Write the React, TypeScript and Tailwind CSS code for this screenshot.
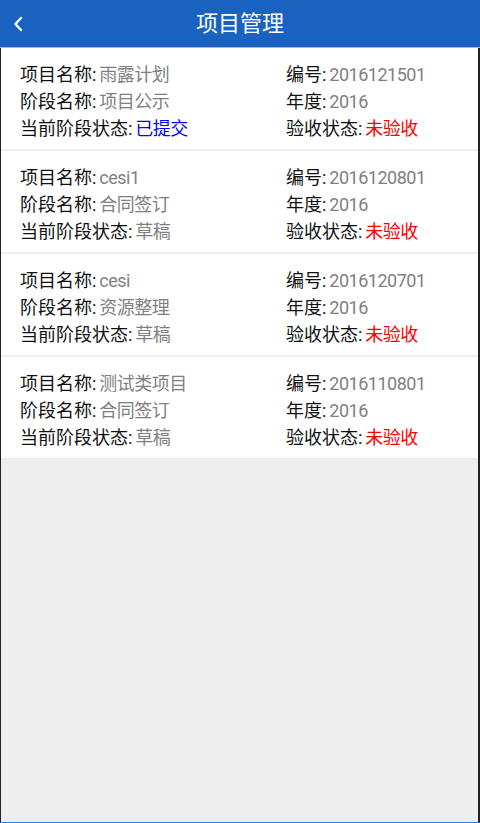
const font = '[font-family:"Roboto","Noto_Sans_CJK_SC",sans-serif]';

type Project = {
  name: string;
  code: string;
  stage: string;
  year: string;
  status: string;
  submitted: boolean;
  check: string;
};

const projects: Project[] = [
  { name: '雨露计划', code: '2016121501', stage: '项目公示', year: '2016', status: '已提交', submitted: true, check: '未验收' },
  { name: 'cesi1', code: '2016120801', stage: '合同签订', year: '2016', status: '草稿', submitted: false, check: '未验收' },
  { name: 'cesi', code: '2016120701', stage: '资源整理', year: '2016', status: '草稿', submitted: false, check: '未验收' },
  { name: '测试类项目', code: '2016110801', stage: '合同签订', year: '2016', status: '草稿', submitted: false, check: '未验收' },
];

const Field = ({ label, value, valueClass = 'text-[#7f7f7f]' }: { label: string; value: string; valueClass?: string }) => (
  <div className="h-[27px] leading-[27px] whitespace-nowrap">
    <span className="text-[#111]">{label}:</span>
    <span className={`ml-[3px] tracking-[-0.5px] ${valueClass}`}>{value}</span>
  </div>
);

const ProjectCard = ({ p }: { p: Project }) => (
  <div className="flex bg-white pt-[13px] pb-[7px] pl-[19px] text-[18px]">
    <div className="w-[266px]">
      <Field label="项目名称" value={p.name} />
      <Field label="阶段名称" value={p.stage} />
      <Field
        label="当前阶段状态"
        value={p.status}
        valueClass={p.submitted ? 'text-[#0000ff]' : 'text-[#7f7f7f]'}
      />
    </div>
    <div>
      <Field label="编号" value={p.code} />
      <Field label="年度" value={p.year} />
      <Field label="验收状态" value={p.check} valueClass="text-[#ff0000]" />
    </div>
  </div>
);

export default function App() {
  return (
    <div className={`flex h-[823px] w-[480px] flex-col overflow-hidden bg-[#eeeeee] ${font}`}>
      <header className="relative flex h-[47px] shrink-0 items-center justify-center bg-[#1a62bf]">
        <button className="absolute left-[12px] top-[16px] flex h-4 w-3 items-center justify-center">
          <svg width="12" height="16" viewBox="0 0 12 16" fill="none">
            <path d="M9 2 L3.5 8 L9 14" stroke="white" strokeWidth="2.4" strokeLinecap="round" strokeLinejoin="round" />
          </svg>
        </button>
        <h1 className="text-[22px] leading-none text-white">项目管理</h1>
      </header>
      <div className="h-px shrink-0 bg-[#9fc0ea]" />
      <main className="flex flex-1 flex-col gap-[2px] border-l border-r-2 border-l-[#222] border-r-[#222] border-b border-b-[#1e88e5]">
        {projects.map((p) => (
          <ProjectCard key={p.code} p={p} />
        ))}
      </main>
    </div>
  );
}
